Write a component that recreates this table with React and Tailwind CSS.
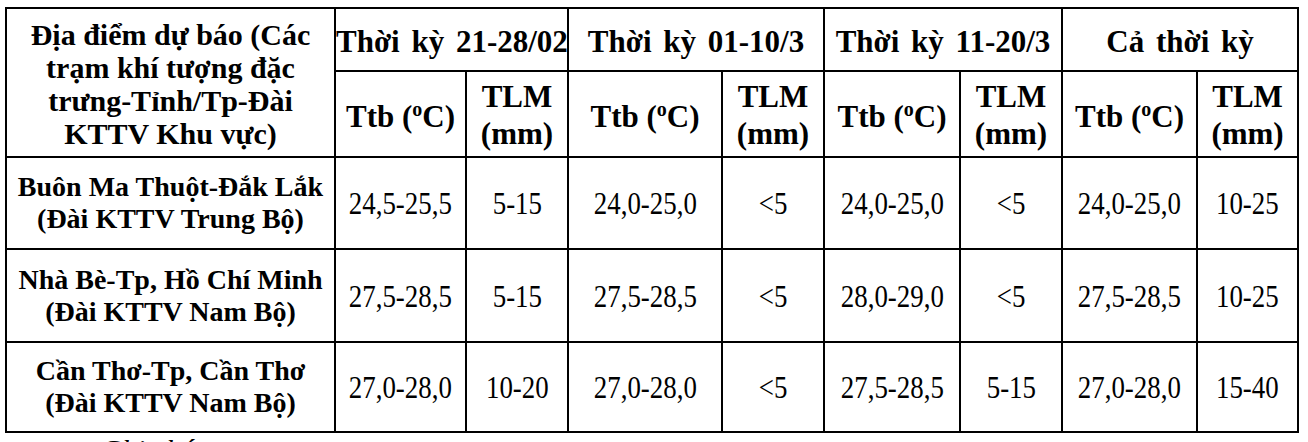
const periods = ["Thời kỳ 21-28/02", "Thời kỳ 01-10/3", "Thời kỳ 11-20/3", "Cả thời kỳ"]

const rows = [
  {
    name: "Buôn Ma Thuột-Đắk Lắk",
    org: "(Đài KTTV Trung Bộ)",
    values: ["24,5-25,5", "5-15", "24,0-25,0", "<5", "24,0-25,0", "<5", "24,0-25,0", "10-25"],
    h: "h-[92px]",
  },
  {
    name: "Nhà Bè-Tp, Hồ Chí Minh",
    org: "(Đài KTTV Nam Bộ)",
    values: ["27,5-28,5", "5-15", "27,5-28,5", "<5", "28,0-29,0", "<5", "27,5-28,5", "10-25"],
    h: "h-[93px]",
  },
  {
    name: "Cần Thơ-Tp, Cần Thơ",
    org: "(Đài KTTV Nam Bộ)",
    values: ["27,0-28,0", "10-20", "27,0-28,0", "<5", "27,5-28,5", "5-15", "27,0-28,0", "15-40"],
    h: "h-[90px]",
  },
]

const colWidths = ["w-[329px]", "w-[131px]", "w-[102px]", "w-[154px]", "w-[102px]", "w-[136px]", "w-[102px]", "w-[135px]", "w-[101px]"]

const cell = "border-2 border-black p-0 text-center align-middle"

const App = () => {
  return (
    <div className="w-[1308px] h-[442px] overflow-hidden bg-white text-black pt-[7px] pl-[5px] font-['Liberation_Serif','Times_New_Roman',serif]">
      <table className="table-fixed border-collapse w-[1294px]">
        <colgroup>
          {colWidths.map((w, i) => (
            <col key={i} className={w} />
          ))}
        </colgroup>
        <thead>
          <tr className="h-[63px]">
            <th rowSpan={2} className={`${cell} font-bold text-[30px] leading-[33px] pt-[2px]`}>
              Địa điểm dự báo (Các
              <br />
              trạm khí tượng đặc
              <br />
              trưng-Tỉnh/Tp-Đài
              <br />
              KTTV Khu vực)
            </th>
            {periods.map((p) => (
              <th
                key={p}
                colSpan={2}
                className={`${cell} font-bold text-[31px] leading-[34px] whitespace-nowrap [word-spacing:4px] pt-[4px]`}
              >
                {p}
              </th>
            ))}
          </tr>
          <tr className="h-[86px]">
            {periods.map((p) => (
              <>
                <th key={p + "t"} className={`${cell} font-bold text-[31px] leading-[34px] whitespace-nowrap pt-[6px]`}>
                  Ttb (<sup className="text-[20px] relative -top-[11px]">o</sup>C)
                </th>
                <th key={p + "m"} className={`${cell} font-bold text-[31px] leading-[37px] pt-[2px]`}>
                  TLM
                  <br />
                  (mm)
                </th>
              </>
            ))}
          </tr>
        </thead>
        <tbody>
          {rows.map((r) => (
            <tr key={r.name} className={r.h}>
              <td className={`${cell} font-bold text-[28px] leading-[32px]`}>
                {r.name}
                <br />
                {r.org}
              </td>
              {r.values.map((v, i) => (
                <td key={i} className={`${cell} text-[32px] leading-[34px] whitespace-nowrap`}>
                  <span className="inline-block scale-x-[0.84]">{v}</span>
                </td>
              ))}
            </tr>
          ))}
        </tbody>
      </table>
      <div className="pl-[95px] pt-[1px] italic text-[30px] leading-[32px]">Ghi chú:</div>
    </div>
  )
}

export default App
